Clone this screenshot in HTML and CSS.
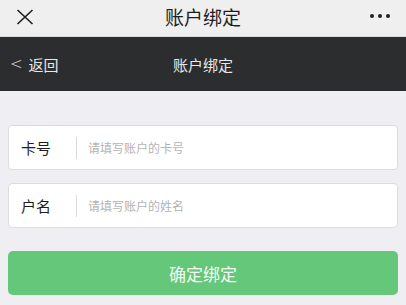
FILE: index.html
```html
<!doctype html>
<html>
  <head>
    <meta charset="utf-8">
    <title>账户绑定</title>
    <link rel="stylesheet" href="styles.css">
  </head>
  <body>
    <div id="app">
      <header class="topbar">
        <div class="topbar-left">
          <svg class="icon-close" width="18" height="16" viewBox="0 0 18 16">
            <path d="M1.5 1 L16.5 15 M16.5 1 L1.5 15" stroke="#1e1e1e" stroke-width="1.6" fill="none"/>
          </svg>
        </div>
        <div class="topbar-title">账户绑定</div>
        <div class="topbar-right">
          <span class="dot"></span><span class="dot"></span><span class="dot"></span>
        </div>
      </header>
      <nav class="navbar">
        <div class="nav-back"><span class="nav-arrow">&lt;</span>返回</div>
        <div class="nav-title">账户绑定</div>
        <div></div>
      </nav>
      <section class="form">
        <label class="field">
          <span class="field-label">卡号</span>
          <span class="field-line"></span>
          <input class="field-input" type="text" placeholder="请填写账户的卡号">
        </label>
        <label class="field">
          <span class="field-label">户名</span>
          <span class="field-line"></span>
          <input class="field-input" type="text" placeholder="请填写账户的姓名">
        </label>
        <button class="submit">确定绑定</button>
      </section>
    </div>
  </body>
</html>
```

FILE: styles.css
```css
*,*:before,*:after {
  margin: 0;
  padding: 0;
  border: 0;
  box-sizing: border-box;
}

body {
  background-color: #efeef2;
  font-family: "Noto Sans CJK SC", "Noto Sans", sans-serif;
  color: #1e1e1e;
}

.topbar {
  height: 37px;
  display: grid;
  grid-template-columns: 1fr auto 1fr;
  align-items: center;
  background-color: #efefef;
  border-bottom: 1px solid #d9d9d9;
  padding: 0 16px;
}

.icon-close {
  display: block;
  margin-top: -2px;
}

.topbar-title {
  font-size: 19px;
  line-height: 1;
  margin-top: -4px;
}

.topbar-right {
  display: flex;
  justify-content: flex-end;
  gap: 4px;
  margin-top: -4px;
}

.dot {
  width: 4px;
  height: 4px;
  border-radius: 50%;
  background-color: #1e1e1e;
}

.navbar {
  height: 54px;
  display: grid;
  grid-template-columns: 1fr auto 1fr;
  align-items: center;
  background-color: #2b2d2f;
  color: #e8e8e8;
  font-size: 15px;
  padding: 0 10px;
}

.nav-back {
  display: flex;
  align-items: center;
}

.nav-arrow {
  font-family: "DejaVu Sans", sans-serif;
  font-weight: 300;
  font-size: 15px;
  margin-right: 6px;
  margin-top: -1px;
}

.form {
  padding: 34px 8px 0;
  display: flex;
  flex-direction: column;
  gap: 13px;
}

.field {
  height: 45px;
  display: flex;
  align-items: center;
  background-color: #fff;
  border: 1px solid #dcdcdc;
  border-radius: 4px;
  padding-left: 12px;
}

.field-label {
  width: 55px;
  font-size: 15px;
  color: #1e1e1e;
}

.field-line {
  width: 1px;
  height: 22px;
  background-color: #dadada;
}

.field-input {
  flex: 1;
  margin-left: 11px;
  font-family: inherit;
  font-size: 12px;
  outline: none;
  background: transparent;
}

.field-input::placeholder {
  color: #b4b4b4;
}

.submit {
  margin-top: 10px;
  height: 44px;
  border-radius: 5px;
  background-color: #64c77a;
  color: #f4fbf5;
  font-family: inherit;
  font-size: 17px;
}
```
